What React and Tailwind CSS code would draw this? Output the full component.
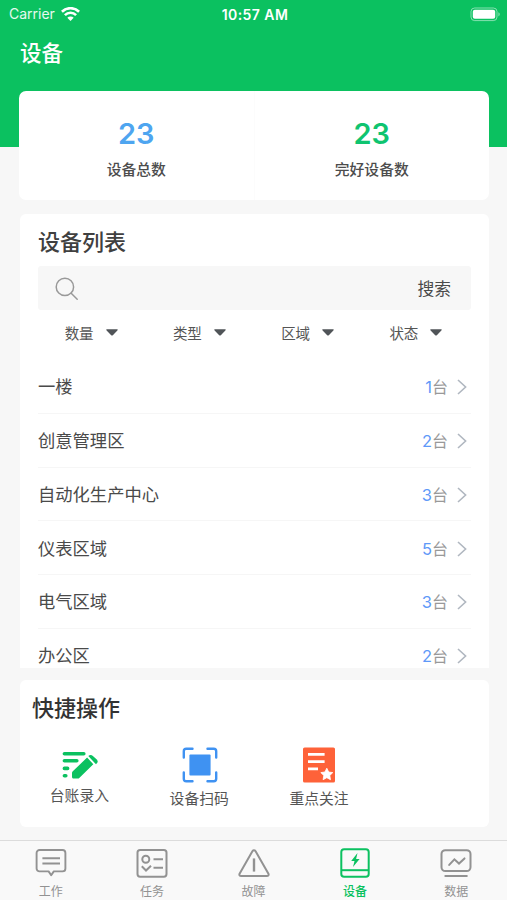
// App.jsx

// React
import React from 'react';

// Devices grouped by area
const areas = [
  { id: 1, name: '一楼', count: 1 },
  { id: 2, name: '创意管理区', count: 2 },
  { id: 3, name: '自动化生产中心', count: 3 },
  { id: 4, name: '仪表区域', count: 5 },
  { id: 5, name: '电气区域', count: 3 },
  { id: 6, name: '办公区', count: 2 },
];

const filters = ['数量', '类型', '区域', '状态'];

// ============================================
// ICONS
// ============================================
const WifiIcon = () => (
  <svg width="19" height="14" viewBox="0 0 19 14" fill="none" stroke="#fff">
    <path d="M.9 4.7a12.4 12.4 0 0 1 17.2 0" strokeWidth="2.7" />
    <path d="M3.9 8.1a8 8 0 0 1 11.2 0" strokeWidth="2.6" />
    <path d="M9.5 14 6.3 10.700a4.600 4.600 0 0 1 6.400 0Z" fill="#fff" stroke="none" />
  </svg>
);

const BatteryIcon = () => (
  <svg width="31" height="15" viewBox="0 0 31 15">
    <rect x="1" y="1" width="26" height="12.6" rx="3.6" fill="none" stroke="#fff" strokeOpacity="0.5" />
    <rect x="2.8" y="2.8" width="22.4" height="9" rx="2" fill="#fff" />
    <path d="M28.4 5.2v4.2c1.8-.7 1.8-3.5 0-4.2Z" fill="#fff" fillOpacity="0.5" />
  </svg>
);

const SearchIcon = () => (
  <svg width="24" height="24" viewBox="0 0 24 24" fill="none" stroke="#999" strokeWidth="1.5" strokeLinecap="round">
    <circle cx="9.9" cy="9.9" r="8.7" />
    <path d="m16.2 16.2 6 6" />
  </svg>
);

const ChevronIcon = () => (
  <svg width="10" height="16" viewBox="0 0 10 16" fill="none" stroke="#b0b7c0" strokeWidth="1.6">
    <path d="m1 1 7.6 7L1 15" />
  </svg>
);

const EntryIcon = () => (
  <svg width="36" height="28" viewBox="0 0 36 28" fill="none" stroke="#0bc160" strokeWidth="3.6" strokeLinecap="round">
    <path d="M2.4 2.8h19.4M2.4 9.8h12.4M2.4 17.4h3.2M2.4 24.8h1.4" />
    <path d="m25.1 6.6 6.2 6.6-13.8 13.6c-.6.6-1.1.8-1.9.8h-4.1c-.9 0-1.5-.6-1.5-1.5v-4c0-.8.3-1.4.8-1.9Z" fill="#0bc160" stroke="none" />
    <path d="M26.3 5.1c1.3-1.4 3.2-1.4 4.6-.2l3.6 3.400c1.400 1.400 1.600 2.500.6 3.800l-1.100 1.200Z" fill="#0bc160" stroke="none" />
  </svg>
);

const ScanIcon = () => (
  <svg width="36" height="36" viewBox="0 0 36 36" fill="none" stroke="#3f92f2" strokeWidth="2.4" strokeLinecap="round">
    <path d="M1.8 10.5V4.3c0-1.6.9-2.5 2.5-2.5h6.2M25.5 1.8h6.2c1.6 0 2.5.9 2.5 2.5v6.2M34.2 25.5v6.2c0 1.6-.9 2.5-2.5 2.5h-6.2M10.5 34.2H4.3c-1.6 0-2.5-.9-2.5-2.5v-6.2" />
    <rect x="7.4" y="7.4" width="21.2" height="21.2" rx="1" fill="#3f92f2" stroke="none" />
  </svg>
);

const FollowIcon = () => (
  <svg width="32" height="36" viewBox="0 0 32 36">
    <rect y="0.5" width="32" height="35" rx="1.6" fill="#fe6239" />
    <path d="M5 7.4h16.6M5 14.6h16.6M5 21.9h10" stroke="#fff" strokeWidth="2.6" />
    <path d="m23.8 21.200 1.9 3.8 4.100.6-3 2.900.7 4.200-3.700-2-3.700 2 .7-4.200-3-2.900 4.100-.6Z" fill="#fff" stroke="#fff" strokeWidth="0.8" strokeLinejoin="round" />
  </svg>
);

const WorkIcon = () => (
  <svg width="32" height="32" viewBox="0 0 32 32" fill="none" stroke="currentColor" strokeWidth="1.9" strokeLinejoin="round">
    <path d="M4.5 3h23a2.9 2.9 0 0 1 2.9 2.9v15.6a2.9 2.9 0 0 1-2.9 2.9h-8.7l-2.6 3.900-2.600-3.900H4.500a2.900 2.900 0 0 1-2.900-2.900V5.900A2.900 2.900 0 0 1 4.500 3Z" />
    <path d="M7.400 11.200h17.600M7.400 16.500h17.600" />
  </svg>
);

const TaskIcon = () => (
  <svg width="32" height="32" viewBox="0 0 32 32" fill="none" stroke="currentColor" strokeWidth="2">
    <rect x="1.5" y="3" width="29" height="26.7" rx="2.6" />
    <circle cx="9.8" cy="12.2" r="3.5" />
    <path d="M17.5 12.2h9.5M17.5 20.700h9.500M5.800 19.300l4.200 4.200 5-4.800" />
  </svg>
);

const FaultIcon = () => (
  <svg width="32" height="32" viewBox="0 0 32 32" fill="none" stroke="currentColor" strokeWidth="2" strokeLinejoin="round">
    <path d="M14.4 4.2c.9-1.3 2.3-1.3 3.2 0l12.7 22.2c.8 1.5.1 2.7-1.5 2.7H3.2c-1.6 0-2.3-1.200-1.500-2.700Z" />
    <path d="M16 11.400v13.200" strokeWidth="2.4" />
  </svg>
);

const DeviceIcon = () => (
  <svg width="32" height="32" viewBox="0 0 32 32" fill="none" stroke="currentColor" strokeWidth="2">
    <rect x="2.3" y="2.2" width="27.4" height="27.6" rx="2.8" />
    <path d="M2.3 23.2h27.4" />
    <path d="M18.5 5.900 12.200 13.900h3.300l-1.500 6.200 6.600-8.200h-3.500Z" fill="currentColor" stroke="none" />
  </svg>
);

const DataIcon = () => (
  <svg width="32" height="32" viewBox="0 0 32 32" fill="none" stroke="currentColor" strokeWidth="2" strokeLinecap="round">
    <rect x="1.5" y="3.2" width="29" height="20.9" rx="3.8" />
    <path d="m9.200 17.900 5.200-5.600 4.600 4.300 5.500-5.200" />
    <path d="M5.300 29h21.500" />
  </svg>
);

const tabs = [
  { label: '工作', icon: WorkIcon },
  { label: '任务', icon: TaskIcon },
  { label: '故障', icon: FaultIcon },
  { label: '设备', icon: DeviceIcon, active: true },
  { label: '数据', icon: DataIcon },
];

const actions = [
  { label: '台账录入', icon: EntryIcon, iconClass: 'h-[33px] pt-[2px]' },
  { label: '设备扫码', icon: ScanIcon, iconClass: 'h-[36px]' },
  { label: '重点关注', icon: FollowIcon, iconClass: 'h-[36px]' },
];

// ============================================
// SECTIONS
// ============================================
const Header = () => (
  <header className="h-[147px] bg-[#0bc160] text-white">
    <div className="flex h-7 items-center pl-[9px] pr-[6px] text-sm leading-none">
      <div className="flex flex-1 items-center gap-[6px]">
        <span className="text-white/90">Carrier</span>
        <WifiIcon />
      </div>
      <span className="pt-px text-center text-sm font-semibold tracking-[0.45px] whitespace-nowrap">10:57 AM</span>
      <div className="flex flex-1 justify-end">
        <BatteryIcon />
      </div>
    </div>
    <h1 className="pl-5 pt-[9px] text-[21.5px] font-medium leading-8">设备</h1>
  </header>
);

const Summary = () => (
  <section className="ml-[19px] mr-[18px] -mt-[56px] flex h-[109px] rounded-[7px] bg-white">
    <div className="flex flex-1 flex-col items-center border-r border-[#fcfcfc] pt-[27px]">
      <span className="text-[29px] font-semibold leading-8 text-[#4ea5f0]">23</span>
      <span className="mt-[8px] text-[14.8px] font-medium leading-6 text-[#4c4c4c]">设备总数</span>
    </div>
    <div className="flex flex-1 flex-col items-center pt-[27px]">
      <span className="text-[29px] font-semibold leading-8 text-[#0fc470]">23</span>
      <span className="mt-[8px] text-[14.8px] font-medium leading-6 text-[#4c4c4c]">完好设备数</span>
    </div>
  </section>
);

const DeviceList = () => (
  <section className="ml-5 mr-[18px] mt-[14px] h-[454px] overflow-hidden rounded-t-[6px] bg-white px-[18px] pt-[12px]">
    <h2 className="text-[22px] font-medium leading-8 text-[#404040]">设备列表</h2>
    <div className="mt-[8px] flex h-[44px] items-center justify-between rounded-[3px] bg-[#f7f7f7] pl-[17px] pr-[20px] pt-px">
      <SearchIcon />
      <span className="pt-px text-[16.8px] leading-6 text-[#4a4a4a]">搜索</span>
    </div>
    <div className="flex h-[50px] pt-[12px]">
      {filters.map((filter) => (
        <div key={filter} className="flex h-6 flex-1 items-center justify-center gap-[12px] pr-[2px] text-[14.5px] leading-6 text-[#555]">
          {filter}
          <svg className="mb-[3px]" width="12" height="7" viewBox="0 0 12 7" fill="#505458">
            <path d="M1 .3h10c.7 0 .9.6.4 1.1L6.8 6.2c-.5.5-1.1.5-1.6 0L.6 1.4C.1.9.3.3 1 .3Z" />
          </svg>
        </div>
      ))}
    </div>
    <ul>
      {areas.map((area) => (
        <li key={area.id} className="flex h-[53.75px] items-center border-b border-[#f6f6f6] pr-[4px] pt-[2px] text-[17.3px] leading-6">
          <span className="flex-1 text-[#4a4a4a]">{area.name}</span>
          <span className="text-[16.5px] text-[#5f99f8]">{area.count}</span>
          <span className="mr-[9px] text-[16px] text-[#999]">台</span>
          <ChevronIcon />
        </li>
      ))}
    </ul>
  </section>
);

const QuickActions = () => (
  <section className="ml-5 mr-[18px] mt-[12px] h-[147px] rounded-[6px] bg-white pt-[12px]">
    <h2 className="pl-[12px] text-[22px] font-medium leading-8 text-[#333]">快捷操作</h2>
    <div className="mt-[23px] flex">
      {actions.map((action) => {
        const Icon = action.icon;
        return (
          <div key={action.label} className="flex w-[119.8px] flex-col items-center">
            <div className={`flex items-center justify-center ${action.iconClass}`}>
              <Icon />
            </div>
            <span className="mt-[4px] pr-px text-[14.8px] leading-6 text-[#555]">{action.label}</span>
          </div>
        );
      })}
    </div>
  </section>
);

const TabBar = () => (
  <nav className="mt-auto flex h-[60px] shrink-0 border-t border-[#dcdcdc] bg-[#f9f9f9]">
    {tabs.map((tab) => {
      const Icon = tab.icon;
      return (
        <div
          key={tab.label}
          className={`flex flex-1 flex-col items-center pt-[6px] ${tab.active ? 'font-medium text-[#0bc160]' : 'text-[#929292]'}`}
        >
          <Icon />
          <span className="mt-[5px] text-xs leading-4">{tab.label}</span>
        </div>
      );
    })}
  </nav>
);

/**
 * App Component
 */
const App = () => (
  <div className="flex h-[900px] w-full flex-col overflow-hidden bg-[#f7f7f7] font-['Inter','Noto_Sans_CJK_SC',sans-serif]">
    <Header />
    <Summary />
    <DeviceList />
    <QuickActions />
    <TabBar />
  </div>
);

export default App;
